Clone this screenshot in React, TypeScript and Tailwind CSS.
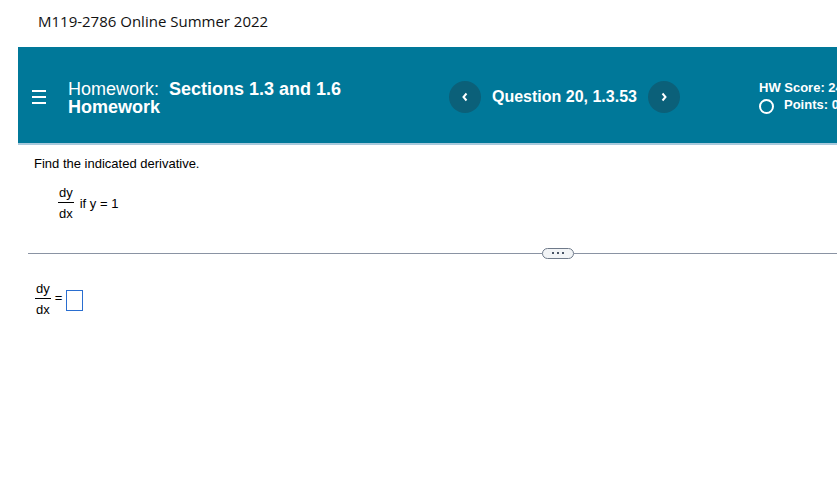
import React from 'react';

function Frac({ className = '' }: { className?: string }) {
  return (
    <span className={`inline-flex flex-col items-center leading-none ${className}`}>
      <span className="px-[1px] pb-[3px]">dy</span>
      <span className="w-full border-t border-black" />
      <span className="px-[1px] pt-[4px]">dx</span>
    </span>
  );
}

export default function App() {
  return (
    <div className="w-[837px] h-[489px] overflow-hidden bg-white" style={{ fontFamily: 'Arial, "Liberation Sans", sans-serif' }}>
      <div className="h-[47px] pl-[38px] pt-[10px] text-[15px] text-[#111]" style={{ fontFamily: '"Open Sans", Inter, sans-serif' }}>
        M119-2786 Online Summer 2022
      </div>

      <div className="ml-[18px] h-[98px] bg-[#007899] border-b-2 border-[#a9c9dc] flex items-center text-white overflow-hidden">
        <div className="shrink-0 w-[14px] ml-[14px] mt-[3px] flex flex-col gap-[4px]">
          <span className="h-[2px] bg-white" />
          <span className="h-[2px] bg-white" />
          <span className="h-[2px] bg-white" />
        </div>
        <div className="shrink-0 ml-[22px] mt-[5px] w-[360px] text-[18px] leading-[18px]">
          <span>Homework:&nbsp; </span>
          <span className="font-bold">Sections 1.3 and 1.6 Homework</span>
        </div>
        <div className="shrink-0 ml-[21px] mt-[3px] flex items-center">
          <button className="w-[32px] h-[32px] rounded-full bg-[#0b6079] flex items-center justify-center">
            <svg width="8" height="10" viewBox="0 0 8 10"><path d="M5.5 1.5 L2.5 5 L5.5 8.5" stroke="white" strokeWidth="2" fill="none" /></svg>
          </button>
          <span className="ml-[11px] w-[156px] text-[16px] font-bold">Question 20, 1.3.53</span>
          <button className="w-[32px] h-[32px] rounded-full bg-[#0b6079] flex items-center justify-center">
            <svg width="8" height="10" viewBox="0 0 8 10"><path d="M2.5 1.5 L5.5 5 L2.5 8.5" stroke="white" strokeWidth="2" fill="none" /></svg>
          </button>
        </div>
        <div className="shrink-0 ml-[79px] mt-[4px] flex flex-col text-[13px] font-bold whitespace-nowrap">
          <span className="leading-[16px]">HW Score: 24.21%</span>
          <span className="flex items-center leading-[18px]">
            <span className="w-[15px] h-[15px] rounded-full border-2 border-white mt-[3px]" />
            <span className="ml-[10px]">Points: 0 of 1</span>
          </span>
        </div>
      </div>

      <div className="pl-[34px] pt-[9px] text-[13px] text-black">
        <div>Find the indicated derivative.</div>
        <div className="mt-[12px] ml-[24px] flex items-center gap-[6px]">
          <Frac className="text-[13px]" />
          <span className="mt-[2px]">if y = 1</span>
        </div>
      </div>

      <div className="ml-[28px] mt-[28px] flex items-center">
        <div className="flex-1 h-[1px] bg-[#8a93a3]" />
        <div className="w-[32px] h-[11px] rounded-full border border-[#6f7a8a] bg-[#f2f4f6] flex items-center justify-center gap-[3px]">
          <span className="w-[2px] h-[2px] bg-[#4a5566]" />
          <span className="w-[2px] h-[2px] bg-[#4a5566]" />
          <span className="w-[2px] h-[2px] bg-[#4a5566]" />
        </div>
        <div className="w-[263px] h-[1px] bg-[#8a93a3]" />
      </div>

      <div className="pl-[35px] mt-[23px] flex items-center text-[13px]">
        <Frac />
        <span className="ml-[4px] mt-[-2px]">=</span>
        <span className="ml-[4px] w-[17px] h-[21px] border border-[#2a6ed0] mt-[3px]" />
      </div>
    </div>
  );
}
